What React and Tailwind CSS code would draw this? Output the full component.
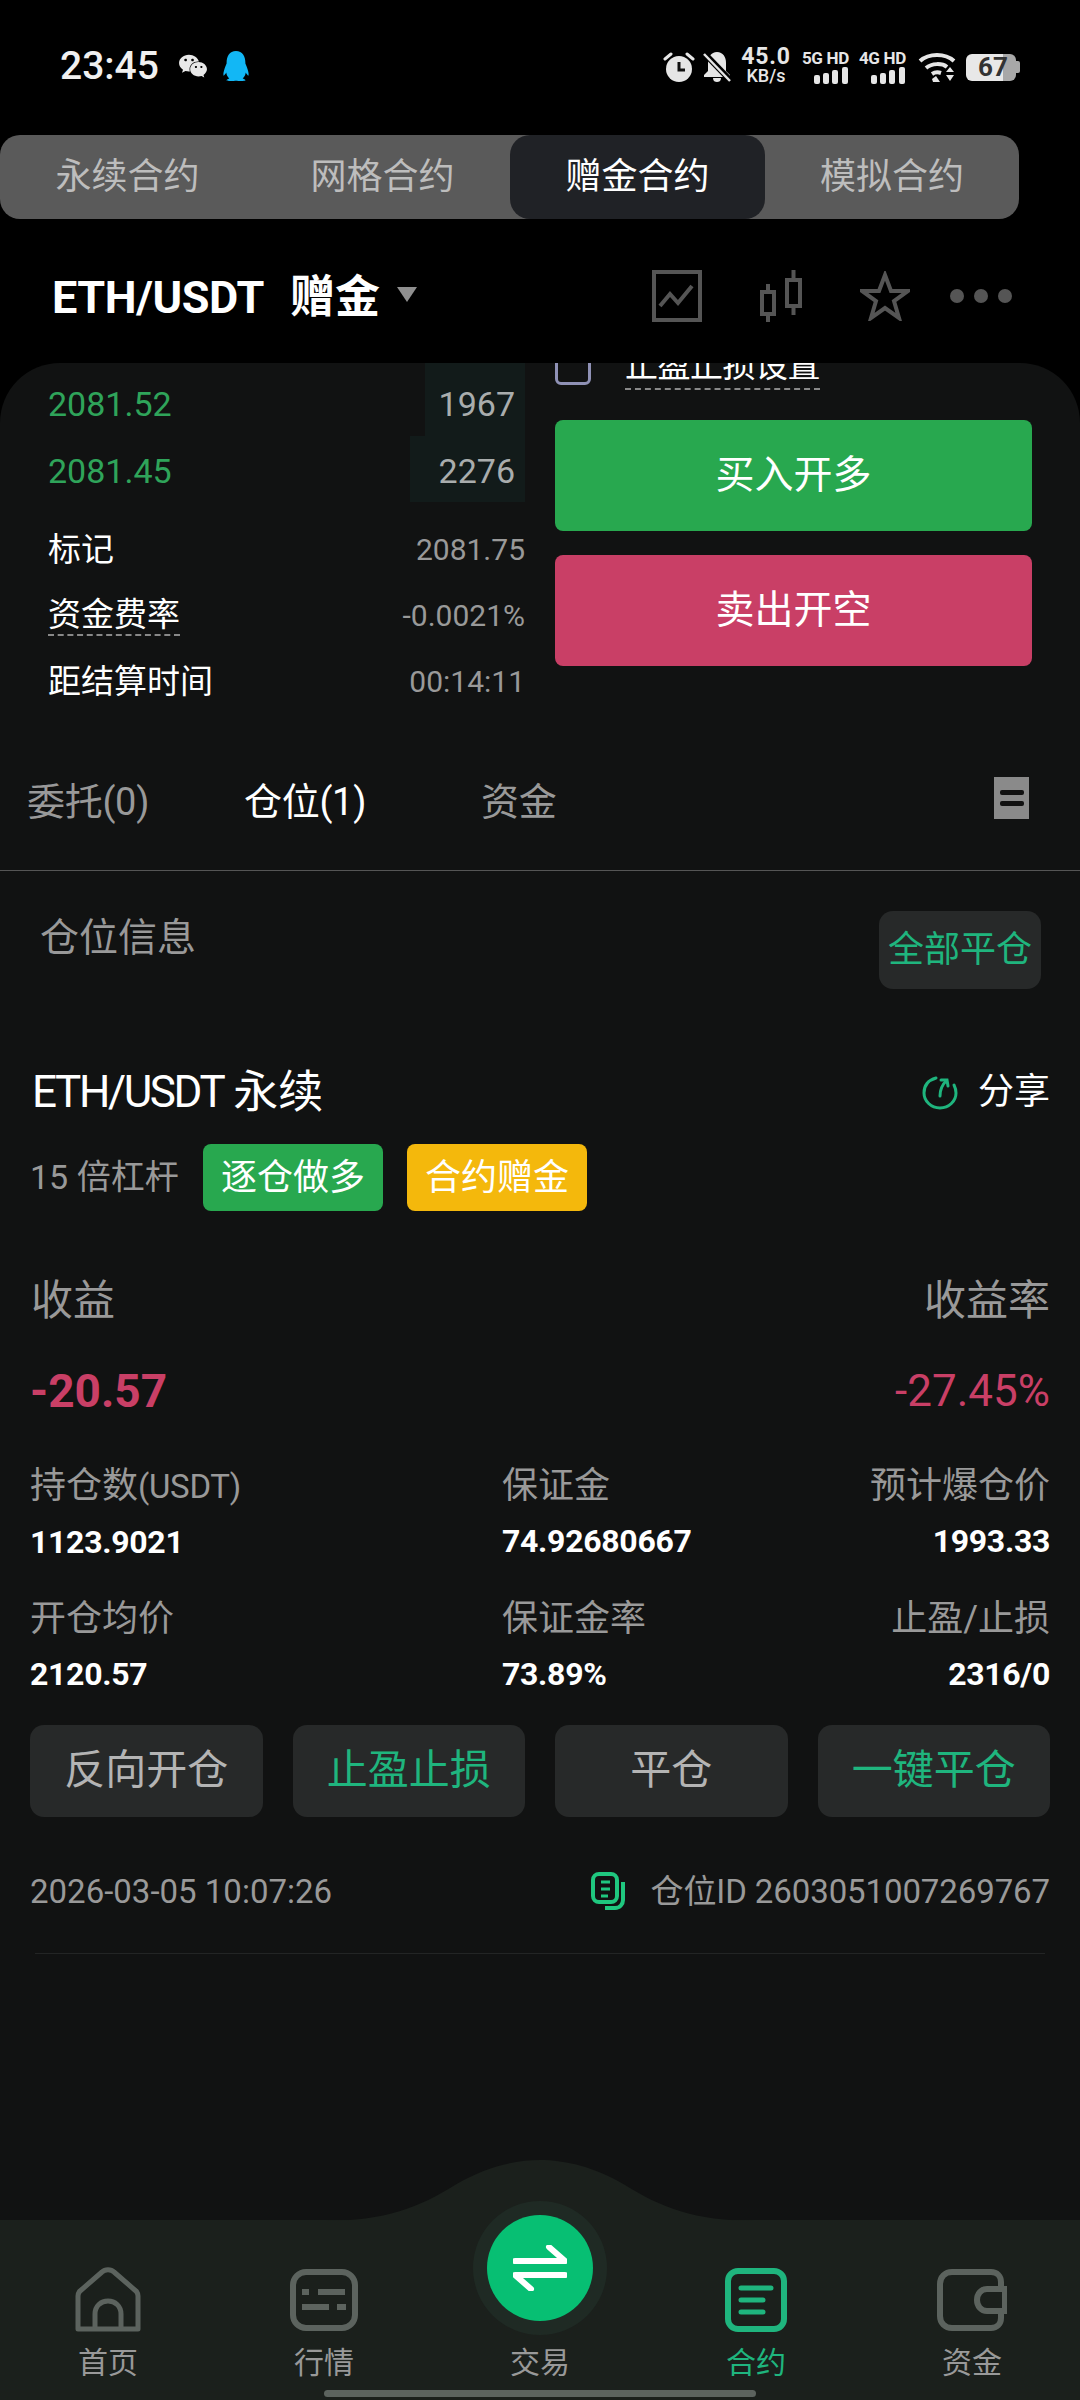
import React from 'react';
import { FaWeixin, FaQq } from 'react-icons/fa';

const Signal = () => (
  <svg width="36" height="17" viewBox="0 0 36 17" fill="#e6e6e6">
    <rect x="1" y="8" width="6" height="9" rx="2" />
    <rect x="10" y="6" width="6" height="11" rx="2" />
    <rect x="19" y="3" width="6" height="14" rx="2" />
    <rect x="29" y="0" width="6" height="17" rx="2" />
  </svg>
);

const Network = ({ label }) => (
  <div className="flex flex-col items-end w-[48px]">
    <span className="text-[17px] leading-[16px] font-bold text-[#e6e6e6] whitespace-nowrap tracking-[-0.3px]">{label}</span>
    <div className="mt-[1px]"><Signal /></div>
  </div>
);

const StatusBar = () => (
  <div className="h-[135px] flex items-start justify-between pl-[60px] pr-[60px] pt-[49px]">
    <div className="flex items-center h-[34px]">
      <span className="text-[39px] leading-none font-medium text-[#f0f0f0] w-[118px]">23:45</span>
      <FaWeixin className="text-[#e8e8e8] w-[30px] h-[26px]" />
      <FaQq className="text-[#12b7f5] w-[28px] h-[30px] ml-[14px]" />
    </div>
    <div className="flex items-center">
      <svg width="32" height="32" viewBox="0 0 32 32" fill="none">
        <circle cx="16" cy="18" r="13" fill="#e6e6e6" />
        <path d="M16 11v8h6" stroke="#111" strokeWidth="3" />
        <path d="M2 8l6-5M30 8l-6-5" stroke="#e6e6e6" strokeWidth="3" strokeLinecap="round" />
      </svg>
      <svg className="ml-[7px]" width="30" height="32" viewBox="0 0 30 32" fill="none">
        <path d="M15 1c6 0 9 5 9 11v8l4 4v2H2v-2l4-4v-8C6 6 9 1 15 1z M11 27h8c0 3-2 4-4 4s-4-1-4-4z" fill="#e6e6e6" />
        <path d="M1 1l28 29" stroke="#000" strokeWidth="6" />
        <path d="M2 3l26 27" stroke="#e6e6e6" strokeWidth="2.5" />
      </svg>
      <div className="flex flex-col items-center ml-[8px] w-[52px] text-[#e6e6e6]">
        <span className="text-[23px] leading-[21px] font-bold tracking-[0.8px] -mt-[3px]">45.0</span>
        <span className="text-[18px] leading-[18px] font-medium">KB/s</span>
      </div>
      <div className="ml-[9px]"><Network label="5G HD" /></div>
      <div className="ml-[9px]"><Network label="4G HD" /></div>
      <svg className="ml-[12px]" width="38" height="29" viewBox="0 0 38 29" fill="none">
        <path d="M2 8c9-8 25-8 34 0" stroke="#e6e6e6" strokeWidth="4" />
        <path d="M8 15c6-5 16-5 21-1" stroke="#e6e6e6" strokeWidth="4" />
        <path d="M14 21c3-2 6-2 9-1" stroke="#e6e6e6" strokeWidth="4" />
        <path d="M14 26l4-3 4 6h-7z" fill="#e6e6e6" />
        <path d="M28 19l4-5 4 5zM28 22h8l-4 6z" fill="#e6e6e6" />
      </svg>
      <div className="relative ml-[10px] w-[54px] h-[27px] flex items-center">
        <div className="w-[37px] h-[27px] bg-[#e8e8e8] rounded-l-[6px]" />
        <div className="w-[13px] h-[27px] bg-[#a8a8a8] rounded-r-[6px]" />
        <div className="w-[4px] h-[12px] bg-[#a8a8a8] rounded-r-[2px]" />
        <span className="absolute left-[12px] top-0 text-[26px] leading-[27px] font-bold text-[#333]">67</span>
      </div>
    </div>
  </div>
);

const ContractTabs = () => (
  <div className="w-[1019px] h-[84px] bg-[#5a5a5a] rounded-[20px] flex items-center text-[36px] text-[#bdbdbd]">
    <div className="w-[255px] h-full flex items-center justify-center">永续合约</div>
    <div className="w-[255px] h-full flex items-center justify-center">网格合约</div>
    <div className="w-[255px] h-full flex items-center justify-center bg-[#202226] rounded-[20px] text-white">赠金合约</div>
    <div className="w-[254px] h-full flex items-center justify-center">模拟合约</div>
  </div>
);

const SymbolHeader = () => (
  <div className="h-[144px] flex items-center pl-[52px] pr-[68px] pt-[12px]">
    <span className="text-[45px] leading-none font-bold text-white tracking-[-0.4px]">ETH/USDT</span>
    <span className="text-[45px] leading-none font-bold text-white ml-[26px]">赠金</span>
    <svg className="ml-[17px] mb-[6px]" width="20" height="15" viewBox="0 0 20 15">
      <path d="M0 0h20l-10 15z" fill="#8f8f8f" />
    </svg>
    <div className="ml-auto flex items-center -mt-[3px]">
      <svg width="50" height="52" viewBox="0 0 50 52" fill="none" stroke="#555" strokeWidth="4">
        <rect x="2" y="2" width="46" height="48" />
        <path d="M8 36l10-12 8 9 14-17" />
      </svg>
      <svg className="ml-[58px]" width="42" height="52" viewBox="0 0 42 52" fill="none" stroke="#555" strokeWidth="4">
        <rect x="2" y="22" width="12" height="22" />
        <path d="M8 14v8M8 44v8" />
        <rect x="27" y="10" width="13" height="26" />
        <path d="M33.5 0v10M33.5 36v9" />
      </svg>
      <svg className="ml-[58px]" width="50" height="50" viewBox="0 0 50 50" fill="none" stroke="#555" strokeWidth="4">
        <path d="M25 4l6 16h17L34 30l5 17-14-10-14 10 5-17L2 20h17z" />
      </svg>
      <div className="ml-[40px] flex items-center gap-[10px]">
        <div className="w-[14px] h-[14px] rounded-full bg-[#555]" />
        <div className="w-[14px] h-[14px] rounded-full bg-[#555]" />
        <div className="w-[14px] h-[14px] rounded-full bg-[#555]" />
      </div>
    </div>
  </div>
);

const BookRow = ({ price, size, barWidth, h, nudge }) => (
  <div className={`flex items-center justify-between ${h}`}>
    <span className={`text-[34px] leading-none text-[#2fa45a] ${nudge}`}>{price}</span>
    <div className={`h-full ${barWidth} bg-[#121b1a] flex items-center justify-end pr-[10px]`}>
      <span className={`text-[34px] leading-none text-[#a9adad] ${nudge}`}>{size}</span>
    </div>
  </div>
);

const InfoRow = ({ label, value, dashed }) => (
  <div className="h-[66px] flex items-center justify-between">
    <span className={`text-[33px] leading-[38px] text-white ${dashed ? 'border-b-2 border-dashed border-[#888]' : ''}`}>{label}</span>
    <span className="text-[30px] leading-none text-[#999]">{value}</span>
  </div>
);

const TradePanel = () => (
  <div className="flex pl-[48px] pr-[48px] h-[370px]">
    <div className="w-[477px] flex flex-col">
      <BookRow price="2081.52" size="1967" barWidth="w-[100px]" h="h-[73px]" nudge="mt-[8px]" />
      <BookRow price="2081.45" size="2276" barWidth="w-[115px]" h="h-[66px]" nudge="mt-[3px]" />
      <div className="h-[15px]" />
      <InfoRow label="标记" value="2081.75" />
      <InfoRow label="资金费率" value="-0.0021%" dashed />
      <InfoRow label="距结算时间" value="00:14:11" />
    </div>
    <div className="ml-[30px] w-[477px] flex flex-col">
      <div className="h-[57px] overflow-hidden relative">
        <div className="absolute top-[-22px] left-0 w-[36px] h-[44px] border-[3px] border-[#8f91b5] rounded-[6px]" />
        <span className="absolute left-[70px] top-[-15px] text-[33px] leading-[36px] text-white border-b-2 border-dashed border-[#888] pb-[4px] whitespace-nowrap tracking-[-0.5px]">止盈止损设置</span>
      </div>
      <button className="h-[111px] bg-[#28a84f] rounded-[8px] text-white text-[39px]">买入开多</button>
      <button className="h-[111px] mt-[24px] bg-[#c93f66] rounded-[8px] text-white text-[39px]">卖出开空</button>
    </div>
  </div>
);

const OrderTabs = () => (
  <div className="h-[138px] border-b border-[#555] flex items-start relative text-[38px] pt-[40px] tracking-[-0.3px]">
    <div className="flex items-center h-[60px] -mt-[1px]">
      <span className="ml-[27px] w-[217px] text-[#999]">委托(0)</span>
      <span className="w-[237px] text-white">仓位(1)</span>
      <span className="text-[#999]">资金</span>
    </div>
    <div className="ml-auto mr-[51px] mt-[4px] w-[35px] h-[42px] bg-[#8a8a8a] flex flex-col items-center justify-center gap-[6px]">
      <div className="w-[24px] h-[5px] bg-[#111] rounded-[2px]" />
      <div className="w-[24px] h-[5px] bg-[#111] rounded-[2px]" />
    </div>
  </div>
);

const Stat = ({ label, suffix, value, align }) => (
  <div className={`flex flex-col ${align === 'right' ? 'items-end' : 'items-start'}`}>
    <span className="text-[36px] leading-[40px] text-[#999] whitespace-nowrap">
      {label}
      {suffix && <span className="text-[33px] tracking-[-0.3px]">{suffix}</span>}
    </span>
    <span className="text-[32px] leading-[40px] mt-[15px] font-bold text-white tracking-[-0.3px]">{value}</span>
  </div>
);

const PositionCard = () => (
  <div className="px-[30px]">
    <div className="flex items-center justify-between h-[60px]">
      <div className="flex items-center text-white">
        <span className="ml-[2px] text-[44px] leading-none tracking-[-2.4px]">ETH/USDT</span>
        <span className="ml-[10px] text-[45px] leading-none">永续</span>
      </div>
      <div className="flex items-center">
        <svg width="36" height="36" viewBox="0 0 36 36" fill="none" stroke="#1fb57e" strokeWidth="3" strokeLinecap="round">
          <path d="M14 4C7 6 2 11 2 19c0 8 7 15 16 15s16-7 16-15c0-3-1-6-2-8" />
          <path d="M18 22c0-6 2-11 6-15" />
          <path d="M19 6l6 0 1 6" />
        </svg>
        <span className="ml-[20px] text-[36px] leading-none text-white">分享</span>
      </div>
    </div>
    <div className="flex items-center mt-[22px] h-[67px]">
      <span className="w-[173px] text-[34px] text-[#999]">15 倍杠杆</span>
      <span className="w-[180px] h-[67px] bg-[#28a84f] rounded-[8px] text-[36px] text-white flex items-center justify-center">逐仓做多</span>
      <span className="ml-[24px] w-[180px] h-[67px] bg-[#f4b80c] rounded-[8px] text-[36px] text-white flex items-center justify-center">合约赠金</span>
    </div>
    <div className="flex justify-between mt-[65px] pl-[1px] text-[42px] leading-[50px] text-[#999]">
      <span>收益</span>
      <span>收益率</span>
    </div>
    <div className="flex items-center justify-between h-[60px] mt-[35px] text-[#c93f66]">
      <span className="text-[46px] leading-none font-bold">-20.57</span>
      <span className="text-[44px] leading-none">-27.45%</span>
    </div>
    <div className="grid grid-cols-[472px_1fr_auto] mt-[45px] gap-y-[37px]">
      <Stat label="持仓数" suffix="(USDT)" value="1123.9021" />
      <Stat label="保证金" value="74.92680667" />
      <Stat label="预计爆仓价" value="1993.33" align="right" />
      <Stat label="开仓均价" value="2120.57" />
      <Stat label="保证金率" value="73.89%" />
      <Stat label="止盈/止损" value="2316/0" align="right" />
    </div>
    <div className="grid grid-cols-4 gap-[30px] mt-[31px]">
      <button className="h-[92px] rounded-[14px] bg-[#272929] text-[41px] text-[#b4b4b4]">反向开仓</button>
      <button className="h-[92px] rounded-[14px] bg-[#272929] text-[41px] text-[#1fb57e]">止盈止损</button>
      <button className="h-[92px] rounded-[14px] bg-[#272929] text-[41px] text-[#b4b4b4]">平仓</button>
      <button className="h-[92px] rounded-[14px] bg-[#272929] text-[41px] text-[#1fb57e]">一键平仓</button>
    </div>
    <div className="flex items-center justify-between h-[50px] mt-[49px] text-[33px] leading-none text-[#999]">
      <span>2026-03-05 10:07:26</span>
      <div className="flex items-center">
        <svg width="36" height="38" viewBox="0 0 36 38" fill="none" stroke="#1fc77f" strokeWidth="4">
          <rect x="2" y="2" width="24" height="28" rx="6" />
          <path d="M10 10h9M10 17h9M10 24h7" strokeWidth="3" />
          <path d="M32 10v18c0 4-3 8-8 8H14" />
        </svg>
        <span className="ml-[24px] tracking-[-0.1px]">仓位ID 2603051007269767</span>
      </div>
    </div>
    <div className="h-px bg-[#232525] mt-[37px] mx-[5px]" />
  </div>
);

const NavItem = ({ label, active, children }) => (
  <div className="w-[216px] flex flex-col items-center">
    <div className="h-[68px] flex items-center justify-center">{children}</div>
    <span className={`mt-[11px] text-[30px] leading-[36px] ${active ? 'text-[#1fb57e]' : 'text-[#999]'}`}>{label}</span>
  </div>
);

const BottomNav = () => (
  <div className="relative h-[180px] bg-[#1b201c]">
    <svg className="absolute left-0 top-[-60px]" width="1080" height="61" viewBox="0 0 1080 61">
      <path d="M325 61c60 0 95-14 130-36C485 7 515 0 540 0s55 7 85 25c35 22 70 36 130 36z" fill="#1b201c" />
    </svg>
    <div className="absolute left-[473px] top-[-19px] w-[134px] h-[134px] rounded-full bg-[#1f2a24] flex items-center justify-center">
      <div className="w-[106px] h-[106px] rounded-full bg-[#07bf73] flex items-center justify-center">
        <svg width="54" height="46" viewBox="0 0 54 46" fill="none" stroke="#fff" strokeWidth="6" strokeLinecap="round" strokeLinejoin="round">
          <path d="M2 16h50L36 2" />
          <path d="M52 30H2l16 14" />
        </svg>
      </div>
    </div>
    <div className="flex pt-[46px]">
      <NavItem label="首页">
        <svg width="66" height="66" viewBox="0 0 66 66" fill="none" stroke="#5c635e" strokeWidth="5" strokeLinejoin="round">
          <path d="M3 62V29c0-2 .5-3 1.500-4.500L27 5c3-3 9-3 12 0l22.500 19.500c1 1.500 1.500 2.500 1.500 4.500v33z" />
          <path d="M20 62V47c0-8 6-13 13-13s13 5 13 13v15" />
        </svg>
      </NavItem>
      <NavItem label="行情">
        <svg width="68" height="62" viewBox="0 0 68 62" fill="none" stroke="#5c635e" strokeWidth="6">
          <rect x="3" y="3" width="62" height="56" rx="13" />
          <path d="M12 23h7M28 23h27M12 38h27M47 38h9" strokeWidth="6" strokeLinecap="butt" />
        </svg>
      </NavItem>
      <NavItem label="交易"><div className="w-[68px] h-[68px]" /></NavItem>
      <NavItem label="合约" active>
        <svg width="62" height="64" viewBox="0 0 62 64" fill="none" stroke="#1fb57e" strokeWidth="6">
          <rect x="3" y="3" width="56" height="58" rx="10" />
          <path d="M16 20h30M16 32h22M16 44h22" strokeWidth="5" strokeLinecap="round" />
        </svg>
      </NavItem>
      <NavItem label="资金">
        <svg width="70" height="62" viewBox="0 0 70 62" fill="none" stroke="#5c635e" strokeWidth="6">
          <path d="M64 20V13C64 7 60 3 54 3H15C8 3 3 8 3 15v32c0 7 5 12 12 12h39c6 0 10-4 10-10v-7" />
          <path d="M68 20H50c-6 0-10 5-10 11s4 11 10 11h18z" />
        </svg>
      </NavItem>
    </div>
    <div className="absolute left-[324px] bottom-[3px] w-[432px] h-[7px] rounded-full bg-[#5c635e]" />
  </div>
);

const App = () => {
  return (
    <div className="w-[1080px] h-[2400px] bg-black flex flex-col overflow-hidden [font-family:Roboto,'Noto_Sans_CJK_SC',sans-serif]">
      <StatusBar />
      <ContractTabs />
      <SymbolHeader />
      <div className="flex-1 bg-[#111212] rounded-t-[60px] overflow-hidden flex flex-col">
        <TradePanel />
        <OrderTabs />
        <div className="flex items-start justify-between pl-[40px] pr-[39px] h-[191px] pt-[40px]">
          <span className="text-[39px] leading-none text-[#999] mt-[8px]">仓位信息</span>
          <div className="w-[162px] h-[78px] bg-[#272929] rounded-[14px] flex items-center justify-center text-[36px] text-[#1fb57e]">全部平仓</div>
        </div>
        <PositionCard />
      </div>
      <BottomNav />
    </div>
  );
};

export default App;
